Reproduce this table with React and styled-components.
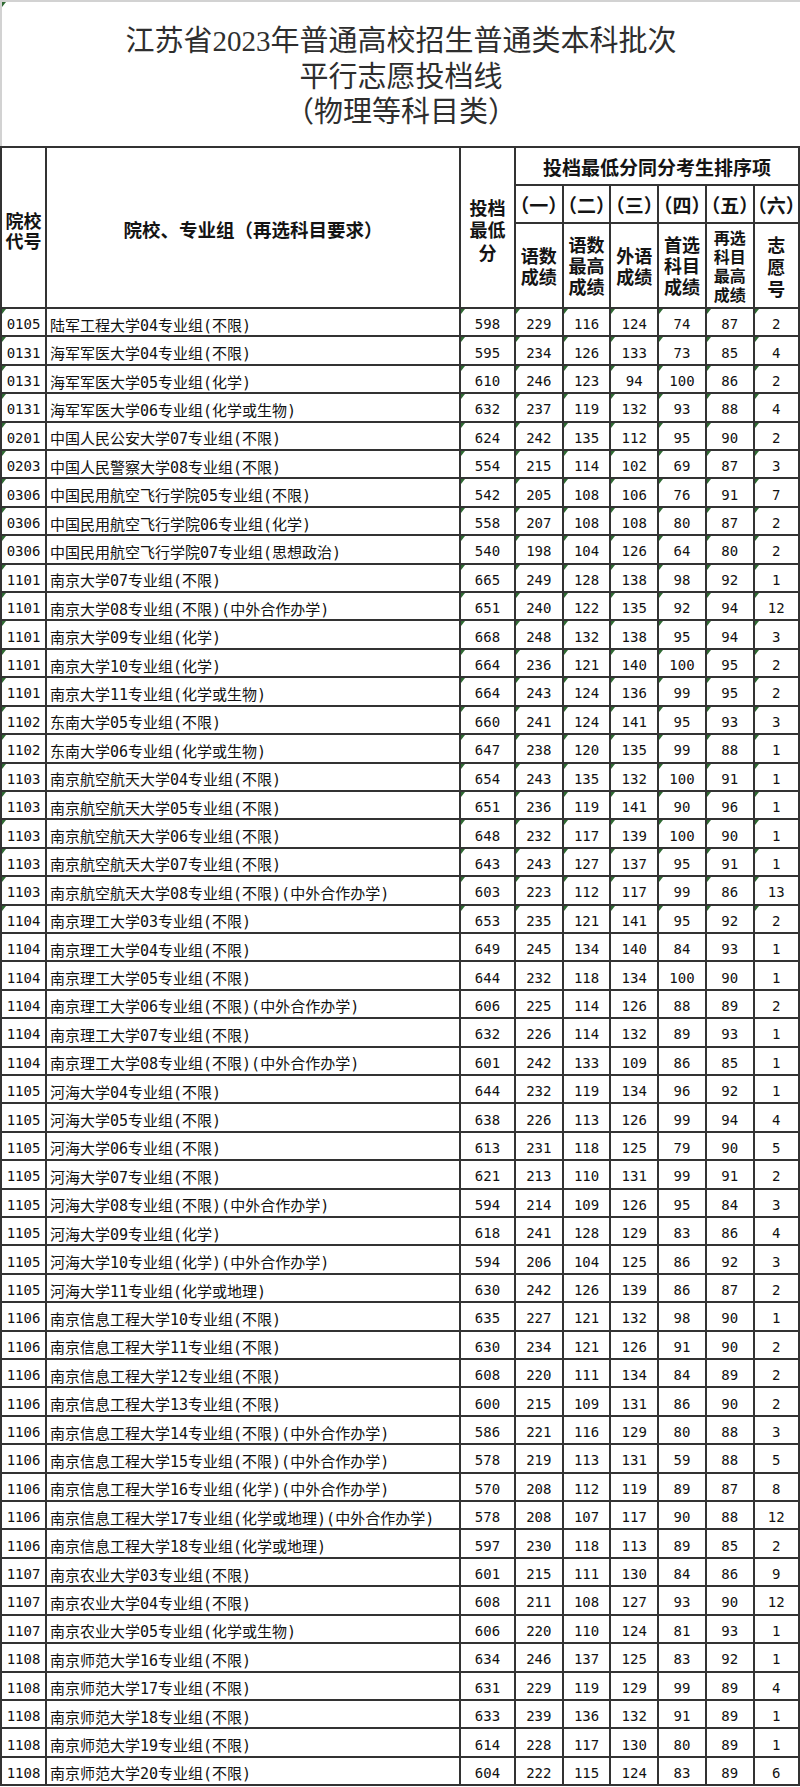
import React from "react";
import styled, { createGlobalStyle, css } from "styled-components";

const GlobalStyle = createGlobalStyle`
  html, body { margin: 0; padding: 0; background: #ffffff; }
  body { width: 800px; font-family: "Noto Sans CJK SC", sans-serif; }
`;

const COLS = "43px 412px 53px repeat(5, 1fr) 43.5px";
const LINE = "#333333";

const Page = styled.div`
  width: 800px;
  background: #ffffff;
`;

const TitleBox = styled.header`
  box-sizing: border-box;
  position: relative;
  height: 146px;
  padding-top: 22px;
  border-top: 2px solid #d2d2d2;
  border-left: 2px solid #d2d2d2;
  text-align: center;
  font-family: "Liberation Serif", "Noto Sans CJK SC", serif;
  font-size: 29px;
  line-height: 35.5px;
  color: #2e2e2e;
  &::before {
    content: "";
    position: absolute;
    left: 0;
    top: 0;
    border-top: 5px solid #2f6a33;
    border-right: 4px solid transparent;
  }
`;

const TitleLine = styled.div`
  white-space: nowrap;
`;

const Table = styled.div`
  display: flex;
  flex-direction: column;
  gap: 2px;
  padding: 2px;
  background: ${LINE};
`;

const HeadGrid = styled.div`
  display: grid;
  grid-template-columns: ${COLS};
  grid-template-rows: 36px 36px 83px;
  gap: 2px;
`;

const HeadCell = styled.div`
  background: #ffffff;
  display: flex;
  align-items: center;
  justify-content: center;
  box-sizing: border-box;
  text-align: center;
  white-space: pre-line;
  font-weight: 700;
  color: #141414;
  font-size: ${(p) => p.$size || 18}px;
  line-height: ${(p) => p.$lh || 21}px;
  padding-top: ${(p) => p.$pt || 0}px;
  font-feature-settings: ${(p) => (p.$halt ? '"halt"' : "normal")};
  ${(p) => p.$rows && css`grid-row: span ${p.$rows};`}
  ${(p) => p.$cols && css`grid-column: span ${p.$cols};`}
`;

const Row = styled.div`
  display: grid;
  grid-template-columns: ${COLS};
  gap: 2px;
  height: 26.42px;
`;

const flagMark = css`
  &::before {
    content: "";
    position: absolute;
    left: 0;
    top: 0;
    border-top: 5px solid #2f6a33;
    border-right: 4px solid transparent;
  }
`;

const Cell = styled.div`
  position: relative;
  background: #ffffff;
  display: flex;
  align-items: center;
  box-sizing: border-box;
  padding-top: 4px;
  white-space: nowrap;
  color: #111111;
  ${(p) => p.$flag && flagMark}
`;

const CodeCell = styled(Cell)`
  justify-content: center;
  font-family: "DejaVu Sans Mono", "Noto Sans CJK SC", monospace;
  font-size: 14px;
`;

const NameCell = styled(Cell)`
  justify-content: flex-start;
  padding-left: 3px;
  font-family: "DejaVu Sans Mono", "Noto Sans CJK SC", monospace;
  font-size: 15px;
`;

const NumCell = styled(Cell)`
  justify-content: center;
  font-family: "DejaVu Sans Mono", monospace;
  font-size: 14px;
`;

const rows = [
  ["0105", "陆军工程大学04专业组(不限)", 598, 229, 116, 124, 74, 87, 2],
  ["0131", "海军军医大学04专业组(不限)", 595, 234, 126, 133, 73, 85, 4],
  ["0131", "海军军医大学05专业组(化学)", 610, 246, 123, 94, 100, 86, 2],
  ["0131", "海军军医大学06专业组(化学或生物)", 632, 237, 119, 132, 93, 88, 4],
  ["0201", "中国人民公安大学07专业组(不限)", 624, 242, 135, 112, 95, 90, 2],
  ["0203", "中国人民警察大学08专业组(不限)", 554, 215, 114, 102, 69, 87, 3],
  ["0306", "中国民用航空飞行学院05专业组(不限)", 542, 205, 108, 106, 76, 91, 7],
  ["0306", "中国民用航空飞行学院06专业组(化学)", 558, 207, 108, 108, 80, 87, 2],
  ["0306", "中国民用航空飞行学院07专业组(思想政治)", 540, 198, 104, 126, 64, 80, 2],
  ["1101", "南京大学07专业组(不限)", 665, 249, 128, 138, 98, 92, 1],
  ["1101", "南京大学08专业组(不限)(中外合作办学)", 651, 240, 122, 135, 92, 94, 12],
  ["1101", "南京大学09专业组(化学)", 668, 248, 132, 138, 95, 94, 3],
  ["1101", "南京大学10专业组(化学)", 664, 236, 121, 140, 100, 95, 2],
  ["1101", "南京大学11专业组(化学或生物)", 664, 243, 124, 136, 99, 95, 2],
  ["1102", "东南大学05专业组(不限)", 660, 241, 124, 141, 95, 93, 3],
  ["1102", "东南大学06专业组(化学或生物)", 647, 238, 120, 135, 99, 88, 1],
  ["1103", "南京航空航天大学04专业组(不限)", 654, 243, 135, 132, 100, 91, 1],
  ["1103", "南京航空航天大学05专业组(不限)", 651, 236, 119, 141, 90, 96, 1],
  ["1103", "南京航空航天大学06专业组(不限)", 648, 232, 117, 139, 100, 90, 1],
  ["1103", "南京航空航天大学07专业组(不限)", 643, 243, 127, 137, 95, 91, 1],
  ["1103", "南京航空航天大学08专业组(不限)(中外合作办学)", 603, 223, 112, 117, 99, 86, 13],
  ["1104", "南京理工大学03专业组(不限)", 653, 235, 121, 141, 95, 92, 2],
  ["1104", "南京理工大学04专业组(不限)", 649, 245, 134, 140, 84, 93, 1],
  ["1104", "南京理工大学05专业组(不限)", 644, 232, 118, 134, 100, 90, 1],
  ["1104", "南京理工大学06专业组(不限)(中外合作办学)", 606, 225, 114, 126, 88, 89, 2],
  ["1104", "南京理工大学07专业组(不限)", 632, 226, 114, 132, 89, 93, 1],
  ["1104", "南京理工大学08专业组(不限)(中外合作办学)", 601, 242, 133, 109, 86, 85, 1],
  ["1105", "河海大学04专业组(不限)", 644, 232, 119, 134, 96, 92, 1],
  ["1105", "河海大学05专业组(不限)", 638, 226, 113, 126, 99, 94, 4],
  ["1105", "河海大学06专业组(不限)", 613, 231, 118, 125, 79, 90, 5],
  ["1105", "河海大学07专业组(不限)", 621, 213, 110, 131, 99, 91, 2],
  ["1105", "河海大学08专业组(不限)(中外合作办学)", 594, 214, 109, 126, 95, 84, 3],
  ["1105", "河海大学09专业组(化学)", 618, 241, 128, 129, 83, 86, 4],
  ["1105", "河海大学10专业组(化学)(中外合作办学)", 594, 206, 104, 125, 86, 92, 3],
  ["1105", "河海大学11专业组(化学或地理)", 630, 242, 126, 139, 86, 87, 2],
  ["1106", "南京信息工程大学10专业组(不限)", 635, 227, 121, 132, 98, 90, 1],
  ["1106", "南京信息工程大学11专业组(不限)", 630, 234, 121, 126, 91, 90, 2],
  ["1106", "南京信息工程大学12专业组(不限)", 608, 220, 111, 134, 84, 89, 2],
  ["1106", "南京信息工程大学13专业组(不限)", 600, 215, 109, 131, 86, 90, 2],
  ["1106", "南京信息工程大学14专业组(不限)(中外合作办学)", 586, 221, 116, 129, 80, 88, 3],
  ["1106", "南京信息工程大学15专业组(不限)(中外合作办学)", 578, 219, 113, 131, 59, 88, 5],
  ["1106", "南京信息工程大学16专业组(化学)(中外合作办学)", 570, 208, 112, 119, 89, 87, 8],
  ["1106", "南京信息工程大学17专业组(化学或地理)(中外合作办学)", 578, 208, 107, 117, 90, 88, 12],
  ["1106", "南京信息工程大学18专业组(化学或地理)", 597, 230, 118, 113, 89, 85, 2],
  ["1107", "南京农业大学03专业组(不限)", 601, 215, 111, 130, 84, 86, 9],
  ["1107", "南京农业大学04专业组(不限)", 608, 211, 108, 127, 93, 90, 12],
  ["1107", "南京农业大学05专业组(化学或生物)", 606, 220, 110, 124, 81, 93, 1],
  ["1108", "南京师范大学16专业组(不限)", 634, 246, 137, 125, 83, 92, 1],
  ["1108", "南京师范大学17专业组(不限)", 631, 229, 119, 129, 99, 89, 4],
  ["1108", "南京师范大学18专业组(不限)", 633, 239, 136, 132, 91, 89, 1],
  ["1108", "南京师范大学19专业组(不限)", 614, 228, 117, 130, 80, 89, 1],
  ["1108", "南京师范大学20专业组(不限)", 604, 222, 115, 124, 83, 89, 6],
];

const FLAGGED_ROWS = 22;

const numerals = ["（一）", "（二）", "（三）", "（四）", "（五）", "（六）"];

const subLabels = [
  { text: "语数\n成绩" },
  { text: "语数\n最高\n成绩" },
  { text: "外语\n成绩" },
  { text: "首选\n科目\n成绩" },
  { text: "再选\n科目\n最高\n成绩", size: 16, lh: 19 },
  { text: "志\n愿\n号", lh: 22 },
];

export default function App() {
  return (
    <Page>
      <GlobalStyle />
      <TitleBox>
        <TitleLine>江苏省2023年普通高校招生普通类本科批次</TitleLine>
        <TitleLine>平行志愿投档线</TitleLine>
        <TitleLine>（物理等科目类）</TitleLine>
      </TitleBox>
      <Table>
        <HeadGrid>
          <HeadCell $rows={3} $lh={20} $pt={4}>{"院校\n代号"}</HeadCell>
          <HeadCell $rows={3} $size={18.5} $pt={4}>院校、专业组（再选科目要求）</HeadCell>
          <HeadCell $rows={3} $lh={22.5} $pt={4}>{"投档\n最低\n分"}</HeadCell>
          <HeadCell $cols={6} $size={19}>投档最低分同分考生排序项</HeadCell>
          {numerals.map((n) => (
            <HeadCell key={n} $size={19} $halt>{n}</HeadCell>
          ))}
          {subLabels.map((l, i) => (
            <HeadCell key={i} $size={l.size} $lh={l.lh}>{l.text}</HeadCell>
          ))}
        </HeadGrid>
        {rows.map((r, i) => {
          const flag = i < FLAGGED_ROWS;
          const [code, name, ...nums] = r;
          return (
            <Row key={i}>
              <CodeCell $flag={flag}>{code}</CodeCell>
              <NameCell>{name}</NameCell>
              {nums.map((n, j) => (
                <NumCell key={j} $flag={flag}>{n}</NumCell>
              ))}
            </Row>
          );
        })}
      </Table>
    </Page>
  );
}
